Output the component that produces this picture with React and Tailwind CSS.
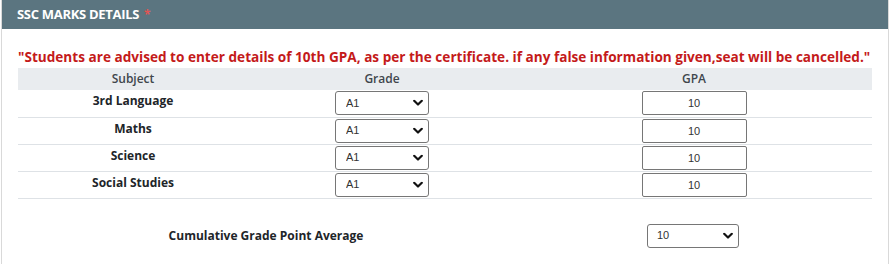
import React from "react";

const rows = ["3rd Language", "Maths", "Science", "Social Studies"];

function Chevron() {
  return (
    <svg
      className="pointer-events-none absolute right-[6px] top-1/2 -translate-y-1/2"
      width="10"
      height="7"
      viewBox="0 0 10 7"
    >
      <path d="M1.2 1.3 L5 5 L8.8 1.3" fill="none" stroke="#111" strokeWidth="2.2" strokeLinecap="round" strokeLinejoin="round" />
    </svg>
  );
}

function Select({ value, w, pl }) {
  return (
    <div className={`relative inline-block ${w}`}>
      <select
        defaultValue={value}
        className={`block h-[24px] w-full appearance-none rounded-[3px] border border-[#767676] bg-white ${pl} text-[11px] text-[#333] outline-none`}
        style={{ fontFamily: "Arial, 'Liberation Sans', sans-serif" }}
      >
        <option value={value}>{value}</option>
      </select>
      <Chevron />
    </div>
  );
}

export default function App() {
  return (
    <div className="w-[893px] h-[264px] overflow-hidden bg-white pl-px" style={{ fontFamily: "'Open Sans', 'Noto Sans', sans-serif" }}>
      <div className="w-[888px] h-[300px] border-x border-[#d9d9d9]">
        <div className="h-[29px] bg-[#5b7580] pl-[15px] flex items-center">
          <span className="text-[13px] font-bold text-white tracking-[-0.3px]">SSC MARKS DETAILS</span>
          <span className="ml-[5px] text-[12px] font-bold text-[#e05555]">*</span>
        </div>
        <div className="px-[16px]">
          <p className="mt-[18px] h-[21px] text-[13.6px] leading-[20px] font-bold text-[#c41a1a] whitespace-nowrap">
            "Students are advised to enter details of 10th GPA, as per the certificate. if any false information given,seat will be cancelled."
          </p>
          <table className="w-[854px] border-collapse text-[12px]">
            <colgroup>
              <col className="w-[230px]" />
              <col className="w-[268px]" />
              <col />
            </colgroup>
            <thead>
              <tr className="h-[22px] bg-[#e9ecef] text-[#40464c]">
                <th className="font-semibold text-center leading-[20px]">Subject</th>
                <th className="font-semibold text-center leading-[20px]">Grade</th>
                <th className="font-semibold text-center leading-[20px]">GPA</th>
              </tr>
            </thead>
            <tbody>
              {rows.map((r) => (
                <tr key={r} className="h-[27px] border-b border-[#dee2e6]">
                  <td className="align-top pt-[1px] text-center font-bold text-[#212529] leading-[20px]">{r}</td>
                  <td className="align-top pt-[1px] text-center">
                    <Select value="A1" w="w-[94px]" pl="pl-[10px]" />
                  </td>
                  <td className="align-top pt-[1px] text-center">
                    <input
                      defaultValue="10"
                      className="h-[24px] w-[105px] rounded-[2px] border border-[#767676] text-center text-[11px] text-[#333] outline-none"
                      style={{ fontFamily: "Arial, 'Liberation Sans', sans-serif" }}
                    />
                  </td>
                </tr>
              ))}
            </tbody>
          </table>
          <div className="mt-[25px] flex items-center w-[854px]">
            <div className="w-[496px] text-center text-[12px] font-bold text-[#212529]">Cumulative Grade Point Average</div>
            <div className="flex-1 flex justify-center">
              <Select value="10" w="w-[92px]" pl="pl-[9px]" />
            </div>
          </div>
        </div>
      </div>
    </div>
  );
}
